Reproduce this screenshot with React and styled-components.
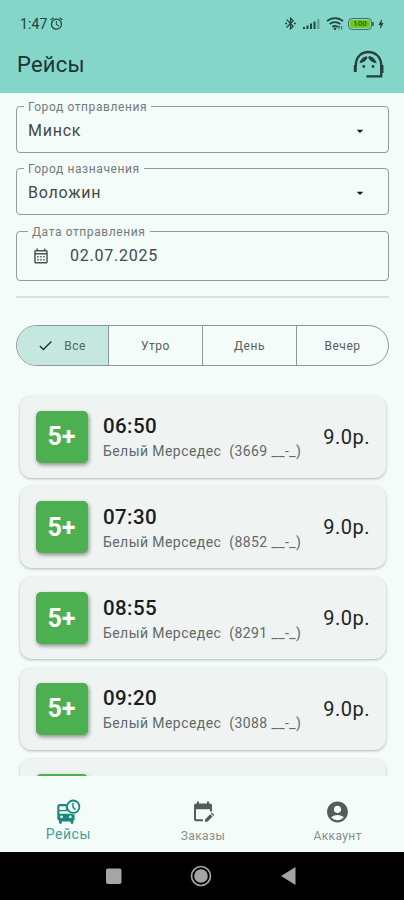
import React, { useState } from 'react';
import styled, { createGlobalStyle } from 'styled-components';
import {
  MdAccountCircle,
  MdAlarm,
  MdArrowDropDown,
  MdBluetoothConnected,
  MdBolt,
  MdCheck,
  MdOutlineCalendarMonth,
} from 'react-icons/md';

const GlobalStyle = createGlobalStyle`
  * {
    box-sizing: border-box;
  }

  body {
    margin: 0;
    background: #f4fcf9;
    font-family: Roboto, 'Noto Sans', sans-serif;
    color: #171d1b;
  }

  button {
    margin: 0;
    padding: 0;
    border: 0;
    background: none;
    font: inherit;
    color: inherit;
  }
`;

const Screen = styled.div`
  display: flex;
  flex-direction: column;
  width: 404px;
  height: 900px;
  overflow: hidden;
  background: #f4fcf9;
`;

const Header = styled.header`
  flex: none;
  height: 93px;
  background: #84d6c9;
`;

const StatusBar = styled.div`
  display: flex;
  align-items: center;
  justify-content: space-between;
  height: 40px;
  padding: 7px 19px 0 20px;
  color: #20443f;
`;

const Clock = styled.div`
  display: flex;
  align-items: center;
  gap: 2px;
  font-size: 14px;
  letter-spacing: 0.1px;
`;

const StatusIcons = styled.div`
  display: flex;
  align-items: center;
  gap: 4px;

  svg {
    display: block;
  }
`;

const TitleBar = styled.div`
  display: flex;
  align-items: center;
  justify-content: space-between;
  height: 48px;
  padding: 0 20px 0 17px;
`;

const Title = styled.h1`
  margin: 0;
  font-size: 22px;
  font-weight: 400;
  letter-spacing: 0.2px;
  color: #1b3733;
`;

const Form = styled.div`
  flex: none;
  display: flex;
  flex-direction: column;
  height: 203px;
  padding: 7px 15px 0 16px;
`;

const Field = styled.fieldset`
  min-width: 0;
  height: ${(props) => props.$height}px;
  margin: 0 0 ${(props) => props.$gap}px;
  padding: 0 20px 0 ${(props) => (props.$inset ? 15 : 11)}px;
  border: 1px solid #949c99;
  border-radius: 4px;
`;

const Legend = styled.legend`
  height: 12px;
  margin-left: -4px;
  padding: 0 4px;
  font-size: 12px;
  line-height: 14px;
  letter-spacing: 0.6px;
  color: #737b78;
`;

const FieldBody = styled.div`
  display: flex;
  align-items: center;
  height: 37px;
`;

const Value = styled.span`
  flex: 1;
  font-size: 16px;
  line-height: 20px;
  letter-spacing: 0.75px;
  color: #424947;
`;

const CalendarIcon = styled(MdOutlineCalendarMonth)`
  flex: none;
  margin-right: 20px;
  color: #4c5552;
`;

const Divider = styled.hr`
  flex: none;
  width: 373px;
  height: 2px;
  margin: 0 15px 0 16px;
  border: 0;
  background: #d9e0de;
`;

const Segments = styled.div`
  flex: none;
  display: grid;
  grid-template-columns: 91px 94px 94px 92px;
  width: 373px;
  height: 41px;
  margin: 27px 15px 24px 16px;
  overflow: hidden;
  border: 1px solid #8d9794;
  border-radius: 21px;
`;

const Segment = styled.button`
  display: flex;
  align-items: center;
  justify-content: center;
  gap: 10px;
  border-left: ${(props) => (props.$first ? 0 : 1)}px solid #8d9794;
  background: ${(props) => (props.$active ? '#c4e8df' : 'transparent')};
  font-size: 12px;
  letter-spacing: 0.5px;
  color: #56605d;

  svg {
    margin-left: -2px;
    color: #22302c;
  }
`;

const TripList = styled.div`
  flex: 1;
  min-height: 0;
  overflow: hidden;
  padding: 5.5px 18px 0 20px;
`;

const TripCard = styled.div`
  display: flex;
  align-items: center;
  height: 82px;
  margin-bottom: 8.8px;
  padding: 0 16px 0 15.5px;
  border-radius: 12px;
  background: #eff3f2;
  box-shadow: 0 1px 3px rgba(0, 0, 0, 0.28);
`;

const Seats = styled.div`
  flex: none;
  display: flex;
  align-items: center;
  justify-content: center;
  width: 52px;
  height: 52px;
  margin-right: 15.5px;
  border-radius: 5px;
  background: #4caf50;
  box-shadow: 1px 2px 4px rgba(0, 0, 0, 0.42);
  font-size: 25px;
  font-weight: 700;
  color: #fff;
`;

const TripInfo = styled.div`
  flex: 1;
  min-width: 0;
  padding-top: 2px;
`;

const Time = styled.div`
  font-size: 20.5px;
  font-weight: 500;
  line-height: 25px;
  letter-spacing: 0.4px;
  color: #191e1d;
`;

const Car = styled.div`
  display: flex;
  gap: 8px;
  margin-top: 2px;
  font-size: 14px;
  line-height: 20px;
  letter-spacing: 0.43px;
  white-space: nowrap;
  color: #626967;
`;

const Price = styled.div`
  font-size: 20px;
  letter-spacing: 0.5px;
  color: #1f2423;
`;

const BottomNav = styled.nav`
  flex: none;
  display: grid;
  grid-template-columns: repeat(3, 1fr);
  height: 76px;
  background: #f4fcf9;
`;

const NavItem = styled.button`
  display: flex;
  flex-direction: column;
  align-items: center;
  padding: 23px 0 0 2px;
  color: ${(props) => (props.$active ? '#16897b' : '#555b59')};

  svg {
    display: block;
    height: 26px;
  }
`;

const NavLabel = styled.span`
  margin-top: ${(props) => (props.$active ? 1 : 3)}px;
  font-size: ${(props) => (props.$active ? 14 : 12)}px;
  line-height: 16px;
  letter-spacing: ${(props) => (props.$active ? 0.5 : 0.4)}px;
  color: ${(props) => (props.$active ? '#45a195' : '#868d8a')};
`;

const SystemNav = styled.div`
  flex: none;
  display: flex;
  align-items: center;
  justify-content: center;
  height: 48px;
  background: #000;
`;

const SignalIcon = () => (
  <svg width="20" height="12" viewBox="0 0 20 12" fill="currentColor">
    <rect x="1" y="9" width="2" height="2" />
    <rect x="4.5" y="7.5" width="2" height="3.5" />
    <rect x="8" y="5.5" width="2" height="5.5" />
    <rect x="11.5" y="3.5" width="2" height="7.5" />
    <rect x="15" y="1" width="2.5" height="10" opacity="0.35" />
  </svg>
);

const WifiIcon = () => (
  <svg
    width="18"
    height="16"
    viewBox="0 0 18 16"
    fill="none"
    stroke="currentColor"
    strokeWidth="1.7"
  >
    <path d="M1 5.2C5.5 1 12.5 1 17 5.2M3.7 8.2C6.8 5.3 11.2 5.3 14.3 8.2M6.3 11c1.6-1.4 3.8-1.4 5.4 0" />
    <circle cx="9" cy="12.8" r="1.3" fill="currentColor" stroke="none" />
    <path d="M13 13.5V10m-1.2 1.2L13 10l1.2 1.2M15.7 10v3.5" strokeWidth="0.8" />
  </svg>
);

const Battery = styled.div`
  display: flex;
  align-items: center;

  &::after {
    content: '';
    width: 2px;
    height: 4px;
    border-radius: 0 1px 1px 0;
    background: #426b55;
  }
`;

const BatteryCell = styled.div`
  width: 24px;
  height: 12px;
  padding: 1px;
  border: 1px solid #47705d;
  border-radius: 4px;
  background: #6fcb19;
  background-clip: content-box;
  font-size: 8px;
  font-weight: 700;
  line-height: 8px;
  text-align: center;
  color: #2e6713;
`;

const ChargeIcon = styled(MdBolt)`
  margin: 0 -2px 0 -3px;
`;

const SupportIcon = () => (
  <svg
    width="32"
    height="29"
    viewBox="0 0 32 29"
    fill="none"
    stroke="#24403d"
    strokeWidth="2.3"
  >
    <path d="M3.8 17V14.5C4.3 6.5 9.5 2 16.3 2S28.7 6.5 29.2 14.5V26.3H14.4" />
    <path d="M3.3 15v7M30 15v8" strokeWidth="3" />
    <path
      d="M7.5 13.2C8.3 9.5 11 6.9 14.8 6.3l.8 1.4c-1.4 3-4 5-8.1 5.5zM16.2 7.7l.8-1.6c3.6.6 6.5 3.2 7.8 7.1-4-.3-6.9-2.3-8.6-5.5z"
      fill="#24403d"
      stroke="none"
    />
    <circle cx="11.8" cy="16.5" r="1.4" fill="#24403d" stroke="none" />
    <circle cx="21" cy="16.5" r="1.4" fill="#24403d" stroke="none" />
  </svg>
);

const BusIcon = () => (
  <svg width="26" height="26" viewBox="0 0 26 26" fill="currentColor">
    <path
      fillRule="evenodd"
      d="M5 5h7c-.9 2.6-.5 5.2.8 7.2H4.4v2.5H16c1.1.6 2.3.8 3.6.6v5.2l-1.2 1.3v1.9c0 .6-.4 1-1 1h-.8c-.6 0-1-.4-1-1v-1.3H6.8v1.3c0 .6-.4 1-1 1H5c-.6 0-1-.4-1-1v-2l-1.7-1.4V8C2.3 6 3.2 5 5 5zM4.4 7.2v3.7h6.7c-.4-1.2-.5-2.4-.3-3.7zM6.6 16.4a1.4 1.4 0 100 2.8 1.4 1.4 0 000-2.8zm8.7 0a1.4 1.4 0 100 2.8 1.4 1.4 0 000-2.8z"
    />
    <circle cx="18.2" cy="7.7" r="6.2" fill="#f4fcf9" stroke="currentColor" strokeWidth="1.8" />
    <path d="M18 4v4l2.3 2.8" fill="none" stroke="currentColor" strokeWidth="1.5" />
  </svg>
);

const OrdersIcon = () => (
  <svg width="24" height="26" viewBox="0 0 24 26" fill="currentColor">
    <path d="M5 22.2c-1.2 0-2-.8-2-2V6.4c0-1.2.8-2 2-2h1V2.5h2v1.9h8V2.5h2v1.9h1c1.2 0 2 .8 2 2v6h-2v-2.2H5v10h7v2z" />
    <path d="M14 22.8v-2.4l5.2-5.2 2.4 2.4-5.2 5.2zM19.9 14.5l.9-.9 2.4 2.4-.9.9z" />
  </svg>
);

const SystemNavIcons = () => (
  <svg width="220" height="28" viewBox="0 0 220 28" fill="#a5a5a5">
    <rect x="14" y="6.5" width="15.5" height="15.5" rx="2" />
    <circle cx="109" cy="14" r="6.8" />
    <circle cx="109" cy="14" r="9.5" fill="none" stroke="#a5a5a5" strokeWidth="1.7" />
    <path d="M189 14L203.5 5v18z" />
  </svg>
);

const periods = ['Все', 'Утро', 'День', 'Вечер'];

const trips = [
  { time: '06:50', car: 'Белый Мерседес', plate: '(3669 __-_)', price: '9.0р.' },
  { time: '07:30', car: 'Белый Мерседес', plate: '(8852 __-_)', price: '9.0р.' },
  { time: '08:55', car: 'Белый Мерседес', plate: '(8291 __-_)', price: '9.0р.' },
  { time: '09:20', car: 'Белый Мерседес', plate: '(3088 __-_)', price: '9.0р.' },
];

const tabs = [
  { label: 'Рейсы', icon: <BusIcon /> },
  { label: 'Заказы', icon: <OrdersIcon /> },
  { label: 'Аккаунт', icon: <MdAccountCircle size={25} /> },
];

const Trip = ({ trip }) => (
  <TripCard>
    <Seats>5+</Seats>
    <TripInfo>
      <Time>{trip.time}</Time>
      <Car>
        <span>{trip.car}</span>
        <span>{trip.plate}</span>
      </Car>
    </TripInfo>
    <Price>{trip.price}</Price>
  </TripCard>
);

const App = () => {
  const [period, setPeriod] = useState('Все');
  const [tab, setTab] = useState('Рейсы');

  return (
    <Screen>
      <GlobalStyle />
      <Header>
        <StatusBar>
          <Clock>
            1:47
            <MdAlarm size={15} />
          </Clock>
          <StatusIcons>
            <MdBluetoothConnected size={15} />
            <SignalIcon />
            <WifiIcon />
            <Battery>
              <BatteryCell>100</BatteryCell>
            </Battery>
            <ChargeIcon size={12} />
          </StatusIcons>
        </StatusBar>
        <TitleBar>
          <Title>Рейсы</Title>
          <SupportIcon />
        </TitleBar>
      </Header>

      <Form>
        <Field $height={53} $gap={9}>
          <Legend>Город отправления</Legend>
          <FieldBody>
            <Value>Минск</Value>
            <MdArrowDropDown size={16} />
          </FieldBody>
        </Field>
        <Field $height={53} $gap={10}>
          <Legend>Город назначения</Legend>
          <FieldBody>
            <Value>Воложин</Value>
            <MdArrowDropDown size={16} />
          </FieldBody>
        </Field>
        <Field $height={56} $gap={0} $inset>
          <Legend>Дата отправления</Legend>
          <FieldBody>
            <CalendarIcon size={18} />
            <Value>02.07.2025</Value>
          </FieldBody>
        </Field>
      </Form>
      <Divider />

      <Segments>
        {periods.map((name, index) => (
          <Segment
            key={name}
            $first={index === 0}
            $active={name === period}
            onClick={() => setPeriod(name)}
          >
            {name === period && <MdCheck size={17} />}
            {name}
          </Segment>
        ))}
      </Segments>

      <TripList>
        {trips.map((trip) => (
          <Trip key={trip.time} trip={trip} />
        ))}
        <TripCard>
          <Seats />
        </TripCard>
      </TripList>

      <BottomNav>
        {tabs.map(({ label, icon }) => (
          <NavItem key={label} $active={label === tab} onClick={() => setTab(label)}>
            {icon}
            <NavLabel $active={label === tab}>{label}</NavLabel>
          </NavItem>
        ))}
      </BottomNav>
      <SystemNav>
        <SystemNavIcons />
      </SystemNav>
    </Screen>
  );
};

export default App;
